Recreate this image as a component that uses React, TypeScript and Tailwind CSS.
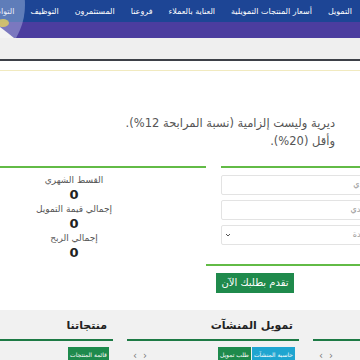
const navItems = [
  "التمويل",
  "أسعار المنتجات التمويلية",
  "العناية بالعملاء",
  "فروعنا",
  "المستثمرون",
  "التوظيف",
  "التواصل",
];

const results = [
  { label: "القسط الشهري", value: "0" },
  { label: "إجمالي قيمة التمويل", value: "0" },
  { label: "إجمالي الربح", value: "0" },
];

function Arrows() {
  return (
    <div className="flex items-center gap-[6px] text-[10px] text-[#777] leading-none" dir="ltr">
      <span>‹</span>
      <span>›</span>
    </div>
  );
}

function Card({ title, buttons }: { title: string; buttons: { text: string; color: string }[] }) {
  return (
    <div className="w-[172px] shrink-0">
      <div className="pt-[8px] pb-[5px] pr-[6px] border-b-2 border-[#1d7a45]">
        <p className="text-[11px] leading-[16px] font-bold text-[#222] whitespace-nowrap">{title}</p>
      </div>
      <div className="flex justify-between items-start mt-[6px] pr-[4px] pl-[6px]">
        <div className="flex gap-[1px]">
          {buttons.map((b) => (
            <span
              key={b.text}
              className={`${b.color} text-white text-[6px] h-[16px] leading-[16px] px-[2px] whitespace-nowrap`}
            >
              {b.text}
            </span>
          ))}
        </div>
        <div className="mt-[4px]">
          <Arrows />
        </div>
      </div>
    </div>
  );
}

function Field({ text, pad, select }: { text: string; pad: string; select?: boolean }) {
  return (
    <div
      className={`h-[20px] border border-[#e3e3e3] rounded-[2px] ${pad} pl-[3px] text-[8px] leading-[18px] text-[#999] flex justify-between whitespace-nowrap`}
    >
      <span>{text}</span>
      {select && (
        <svg width="6" height="18" viewBox="0 0 6 18">
          <path d="M1 8 L3 10 L5 8" stroke="#555" strokeWidth="1" fill="none" />
        </svg>
      )}
    </div>
  );
}

export default function App() {
  return (
    <div
      dir="rtl"
      className="w-[360px] h-[360px] overflow-hidden bg-white relative"
      style={{ fontFamily: '"DejaVu Sans", "Noto Sans", sans-serif' }}
    >
      {/* header */}
      <div className="relative h-[38px]">
        <div className="h-[22px] bg-[#1d4595] flex items-center gap-[16px] pr-[8px] pt-[1px] text-white text-[8px] whitespace-nowrap overflow-hidden">
          {navItems.map((n) => (
            <span key={n}>{n}</span>
          ))}
        </div>
        <div className="h-[16px] bg-[#4b3d9f]" />
        <svg width="32" height="38" className="absolute left-0 top-0" viewBox="0 0 32 38">
          <circle cx="-40" cy="5" r="65" fill="#c4d2f0" fillOpacity="0.4" />
          <ellipse cx="3" cy="23" rx="6" ry="4" fill="#e6cf5c" fillOpacity="0.8" />
          <path d="M0 27 Q8 33 14 38 L0 38 Z" fill="#f3f3f3" />
        </svg>
      </div>
      <div className="h-[21px] bg-[#efefef]" />
      <div className="h-[2px] bg-[#3d4047]" />
      <div className="h-[9px]" />
      <div className="h-[1px] bg-[#f1eabf]" />

      {/* note */}
      <div className="pt-[43px] pr-[25px] text-[11.5px] leading-[18px] text-[#555] whitespace-nowrap">
        <p>ديرية وليست إلزامية (نسبة المرابحة 12%).</p>
        <p>وأقل (20%).</p>
      </div>

      {/* calculator */}
      <div className="mt-[16px] flex gap-[15px] h-[98px] mr-[-52px]">
        <div className="w-[191px] shrink-0 border-t-2 border-[#62bb46] pt-[7px] flex flex-col gap-[5px]">
          <Field text="المبلغ النقدي" pad="pr-[15px]" />
          <Field text="الراتب النقدي" pad="pr-[15px]" />
          <Field text="اختر المدة" pad="pr-[24px]" select />
        </div>
        <div className="w-[264px] shrink-0 border-t-2 border-[#62bb46] pt-[5px] text-center">
          {results.map((r) => (
            <div key={r.label}>
              <p className="text-[9px] leading-[14px] text-[#555]">{r.label}</p>
              <p className="text-[13px] leading-[15px] font-bold text-[#222]">{r.value}</p>
            </div>
          ))}
        </div>
      </div>
      <div className="h-[2px] w-[175px] bg-[#62bb46] mr-[-21px]" />
      <div className="mt-[7px] mr-[66px] w-[78px] h-[20px] bg-[#1f8a4c] text-white text-[10px] leading-[20px] text-center">
        تقدم بطلبك الآن
      </div>

      {/* products strip */}
      <div className="mt-[17px] bg-[#f1f1f1] h-[60px]">
        <div className="flex gap-[14px] mr-[-125px]">
          <Card
            title="تمويل الأفراد"
            buttons={[{ text: "حاسبة الأفراد", color: "bg-[#1fa5d0]" }]}
          />
          <Card
            title="تمويل المنشآت"
            buttons={[
              { text: "حاسبة المنشآت", color: "bg-[#1fa5d0]" },
              { text: "طلب تمويل", color: "bg-[#1e8a4c]" },
            ]}
          />
          <Card title="منتجاتنا" buttons={[{ text: "قائمة المنتجات", color: "bg-[#1e8a4c]" }]} />
        </div>
      </div>
    </div>
  );
}
